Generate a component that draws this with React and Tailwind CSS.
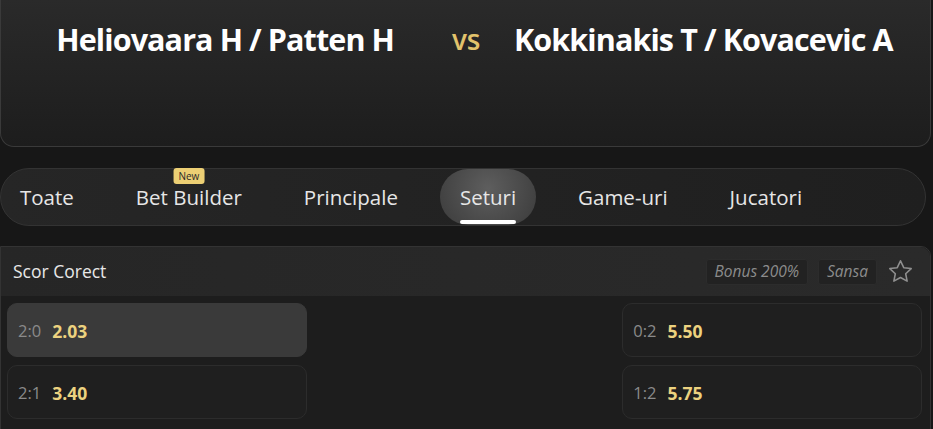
import { useState } from 'react';

const tabs = ['Toate', 'Bet Builder', 'Principale', 'Seturi', 'Game-uri', 'Jucatori'];

const odds = [
  [{ label: '2:0', price: '2.03', hot: true }, null, { label: '0:2', price: '5.50' }],
  [{ label: '2:1', price: '3.40' }, null, { label: '1:2', price: '5.75' }],
];

function Star() {
  return (
    <svg width="27" height="27" viewBox="0 0 24 24" fill="none" stroke="#8f8f8f" strokeWidth="1.4" strokeLinejoin="round">
      <path d="M12 2.5l2.9 6.1 6.6.8-4.9 4.6 1.3 6.6L12 17.3l-5.9 3.3 1.3-6.6-4.9-4.6 6.6-.8z" />
    </svg>
  );
}

function OddButton({ item }) {
  if (!item) return <div />;
  return (
    <button
      className={
        'h-[54px] rounded-[10px] border flex items-center gap-[11px] pl-[10px] pt-[2px] ' +
        (item.hot ? 'bg-[#3a3a3a] border-[#3a3a3a]' : 'bg-[#1f1f1f] border-[#2c2c2c]')
      }
    >
      <span className="text-[16.5px] text-[#8a8a8a]">{item.label}</span>
      <span className="text-[17.5px] text-[#ecd27f] font-bold">{item.price}</span>
    </button>
  );
}

export default function App() {
  const [active, setActive] = useState('Seturi');

  return (
    <div className="w-[933px] h-[429px] overflow-hidden bg-[#171717] text-white" style={{ fontFamily: '"Open Sans", "Noto Sans", sans-serif' }}>
      {/* match header */}
      <div className="h-[147px] w-[931px] rounded-b-[14px] border border-t-0 border-[#3a3a3a] bg-gradient-to-b from-[#2a2a2a] to-[#1d1d1d] flex items-start pt-[19px] whitespace-nowrap">
        <div className="w-[393px] flex justify-end text-[30.5px] font-bold tracking-[-0.9px] leading-[40px]">
          Heliovaara H / Patten H
        </div>
        <div className="ml-[58px] text-[28px] font-semibold text-[#e2c36c] leading-[40px] tracking-[-0.3px]">vs</div>
        <div className="ml-[34px] text-[30.5px] font-bold tracking-[-0.9px] leading-[40px]">
          Kokkinakis T / Kovacevic A
        </div>
      </div>

      {/* tabs */}
      <div className="mt-[21px] h-[58px] w-[926px] rounded-full border border-[#333] bg-gradient-to-r from-[#262626] to-[#1f1f1f] flex items-stretch gap-[22px]">
        {tabs.map((t) => (
          <button
            key={t}
            onClick={() => setActive(t)}
            className={
              'relative px-5 first:pl-[19px] rounded-full text-[20.5px] text-[#e6e6e6] ' +
              (active === t ? 'bg-[radial-gradient(circle_at_50%_35%,#5e5e5e,#3b3b3b)]' : '')
            }
          >
            {t === 'Bet Builder' && (
              <span className="absolute -top-[1px] left-1/2 -translate-x-1/2 rounded-[3px] bg-[#eccf74] px-[5px] text-[10px] leading-[16px] text-[#2a2a2a]">
                New
              </span>
            )}
            {t}
            {active === t && (
              <span className="absolute bottom-[1px] left-5 right-5 h-[4px] rounded-full bg-white" />
            )}
          </button>
        ))}
      </div>

      {/* market */}
      <div className="mt-[20px] w-[931px] h-[190px] rounded-tr-[10px] border border-[#333] bg-[#1d1d1d]">
        <div className="h-[49px] bg-gradient-to-r from-[#262626] to-[#2a2a2a] flex items-center pl-[12px] pr-[16px] rounded-tr-[10px]">
          <span className="text-[17.5px] text-[#e8e8e8]">Scor Corect</span>
          <div className="ml-auto flex items-center gap-[10px]">
            <span className="h-[26px] px-[8px] flex items-center rounded-[3px] border border-[#2c2c2c] bg-[#222] text-[15.5px] italic text-[#8c8c8c]">
              Bonus 200%
            </span>
            <span className="h-[26px] px-[8px] flex items-center rounded-[3px] border border-[#2c2c2c] bg-[#222] text-[15.5px] italic text-[#8c8c8c]">
              Sansa
            </span>
            <Star />
          </div>
        </div>
        <div className="pl-[6px] pr-[8px] pt-[7px] grid grid-cols-3 gap-x-[8px] gap-y-[8px]">
          {odds.flat().map((o, i) => (
            <OddButton key={i} item={o} />
          ))}
        </div>
      </div>
    </div>
  );
}
